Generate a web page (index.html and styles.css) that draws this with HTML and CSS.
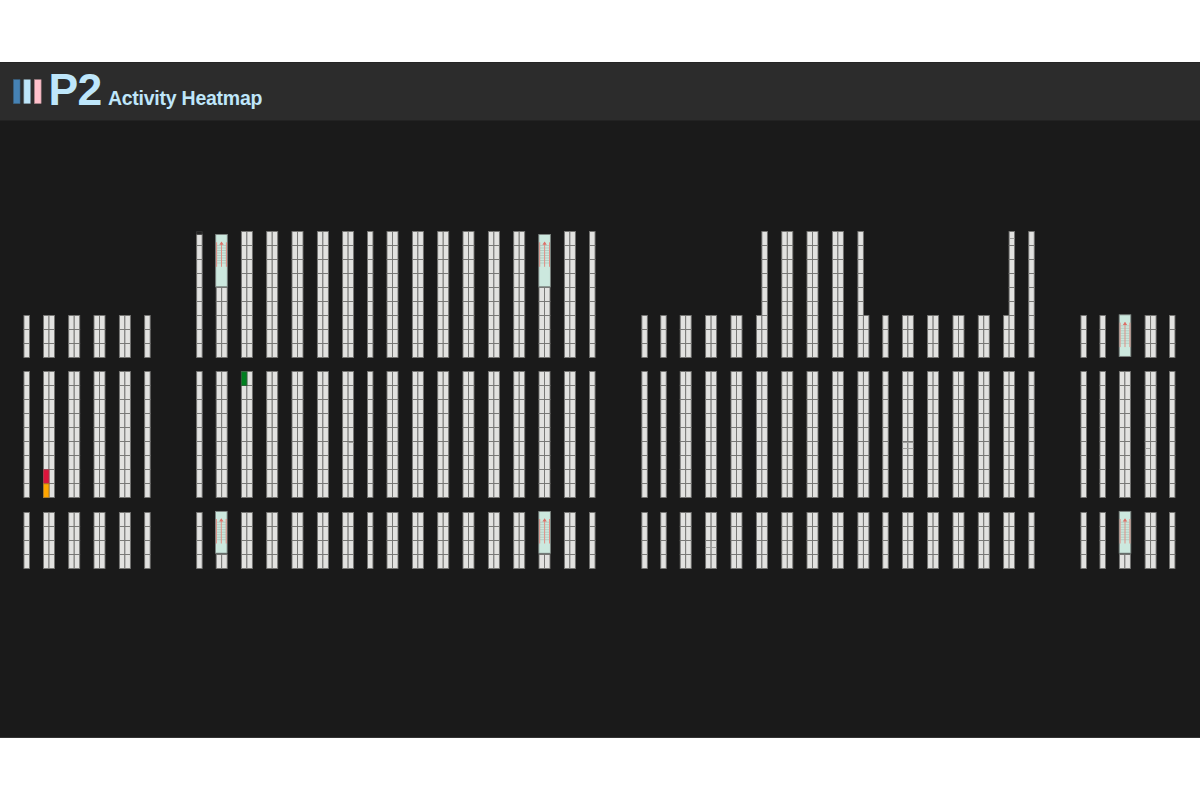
FILE: index.html
```html
<!DOCTYPE html>
<html lang="en">
<head>
<meta charset="utf-8">
<title>P2 Activity Heatmap</title>
<link rel="stylesheet" href="styles.css">
</head>
<body>
<div class="app">
  <header class="header">
    <svg class="logo" width="30" height="26" viewBox="0 0 30 26">
      <rect class="bar bar-blue" x="0.6" y="0.7" width="6.4" height="23.8"/>
      <rect class="bar bar-light" x="10.9" y="0.7" width="6.4" height="23.8"/>
      <rect class="bar bar-pink" x="21.5" y="0.7" width="6.6" height="23.8"/>
    </svg>
    <h1 class="title">P2</h1>
    <h2 class="subtitle">Activity Heatmap</h2>
  </header>
  <main class="floor">
    <svg class="plan" id="plan" width="1200" height="612" viewBox="0 121 1200 612"></svg>
  </main>
</div>
<script src="plan.js"></script>
</body>
</html>
```
FILE: styles.css
```css
body {
  margin: 0;
  background: #fff;
  font-family: "Liberation Sans", Arial, sans-serif;
}
.app {
  box-sizing: border-box;
  margin-top: 62px;
  height: 676px;
  background: #1a1a1a;
  border-bottom: 1px solid #333;
  display: flex;
  flex-direction: column;
}
.header {
  box-sizing: border-box;
  height: 59px;
  padding: 0 13px;
  display: flex;
  align-items: baseline;
  background: #2c2c2c;
  border-top: 1px solid #242424;
  border-bottom: 1px solid #222;
  color: #bee6fa;
}
.logo {
  align-self: flex-start;
  margin-top: 16px;
  flex: none;
}
.bar { stroke-width: 0.6; }
.bar-blue { fill: #4682b4; stroke: #3d698d; }
.bar-light { fill: #bee6fa; stroke: #88a2ae; }
.bar-pink { fill: #ffc0cb; stroke: #b28a91; }
.title {
  margin: 0 0 0 5.5px;
  font-size: 44.5px;
  line-height: 54px;
  letter-spacing: -0.8px;
}
.subtitle {
  margin: 0 0 0 6.6px;
  font-size: 19.5px;
  letter-spacing: -0.25px;
}
.plan { display: block; }
.cell { fill: #e2e2e0; stroke: #747472; stroke-width: 0.9; }
.cell-void { fill: #1a1a1a; stroke: #3a3a3a; }
.cell-red { fill: #dc143c; stroke: #a93a4c; }
.cell-orange { fill: #ffa500; stroke: #a87a28; }
.cell-green { fill: #008020; stroke: #2c6038; }
.seam { stroke: #a0a09e; stroke-width: 1; }
.lift { fill: #cce8de; stroke: #7d8582; stroke-width: 0.9; }
.tread { stroke: #b2cdc3; stroke-width: 1; }
.rail { stroke: #e08f86; stroke-width: 1; }
.head { fill: #dc7068; }
```
FILE: plan.js
```js
const plan = document.getElementById('plan');
const W = 5.5;
const H = 14;

function add(tag, cls, attrs) {
  const el = document.createElementNS('http://www.w3.org/2000/svg', tag);
  el.setAttribute('class', cls);
  for (const key in attrs) el.setAttribute(key, attrs[key]);
  plan.appendChild(el);
}

function cell(x, y, h = H, kind = '') {
  add('rect', 'cell ' + kind, { x, y, width: W, height: h });
}

function column(x, top, rows) {
  for (let i = 0; i < rows; i++) cell(x, top + i * H);
}

function seam(x1, x2, y) {
  add('line', 'seam', { x1, x2, y1: y, y2: y });
}

// Each aisle: centre, rows of left half, rows of right half ("s" is a single shelf).
const aisles = [
  [26.7, 's', 3], [49, 3, 3], [74.2, 3, 3], [99.5, 3, 3], [124.9, 3, 3], [147.4, 's', 3],
  [199.4, 's', 8], [221.7, 5, 5], [246.9, 9, 9], [272.2, 9, 9], [297.5, 9, 9], [322.9, 9, 9],
  [348.1, 9, 9], [370.2, 's', 9], [392.5, 9, 9], [417.9, 9, 9], [443.2, 9, 9], [468.5, 9, 9],
  [493.9, 9, 9], [519.2, 9, 9], [544.5, 5, 5], [569.9, 9, 9], [592.3, 's', 9],
  [644.6, 's', 3], [663.5, 's', 3], [685.7, 3, 3], [711.1, 3, 3], [736.5, 3, 3], [761.9, 3, 9],
  [787.3, 9, 9], [812.5, 9, 9], [837.9, 9, 9], [863.4, 9, 3], [885.5, 's', 3], [907.9, 3, 3],
  [933.1, 3, 3], [958.5, 3, 3], [983.8, 3, 3], [1009.1, 3, 9], [1031.5, 's', 9],
  [1083.7, 's', 3], [1102.7, 's', 3], [1124.9, 0, 0], [1150.6, 3, 3], [1172.2, 's', 3]
];
const lowerLifts = [221.7, 544.5, 1124.9];

for (const [x, left, right] of aisles) {
  const lower = lowerLifts.includes(x) ? 1 : 4;
  const halves = left === 's' ? [[x - W / 2, right]] : [[x - W, left], [x, right]];
  for (const [hx, rows] of halves) {
    column(hx, 357.5 - rows * H, rows);
    column(hx, 371.5, 9);
    column(hx, 568.5 - lower * H, lower);
  }
}

cell(199.4 - W / 2, 234.5, 11);
cell(199.4 - W / 2, 231.8, 2.3, 'cell-void');
cell(49 - W, 469.8, H, 'cell-red');
cell(49 - W, 483.8, H - 0.3, 'cell-orange');
cell(246.9 - W, 371.8, H - 0.3, 'cell-green');

seam(1009.4, 1014.4, 238.5);
seam(348.2, 353.6, 442.5);
seam(902.6, 913.3, 442.5);
seam(902.6, 913.3, 448.5);
seam(705.7, 716.4, 547.5);
seam(1145.2, 1150.2, 448.5);

function lift(x, y, h, railTop) {
  add('rect', 'lift', { x: x - 5.8, y, width: 11.6, height: h });
  for (let i = 0; i < 8; i++) {
    const ty = railTop + 3.2 + i * 2.5;
    add('line', 'tread', { x1: x - 4.5, x2: x + 4.5, y1: ty, y2: ty });
  }
  for (const dx of [-4.9, 0, 4.9]) {
    add('line', 'rail', { x1: x + dx, x2: x + dx, y1: railTop, y2: railTop + 24.5 });
  }
  add('path', 'head', { d: `M${x} ${railTop - 0.8}l2.2 3.2h-4.4z` });
}

lift(221.5, 234.5, 52.3, 242.3);
lift(544.6, 234.5, 52.3, 242.3);
lift(221.3, 511.4, 41.8, 519);
lift(544.6, 511.5, 41.8, 519);
lift(1125, 314.8, 41.6, 322.6);
lift(1125, 511.4, 41.8, 519);
```
